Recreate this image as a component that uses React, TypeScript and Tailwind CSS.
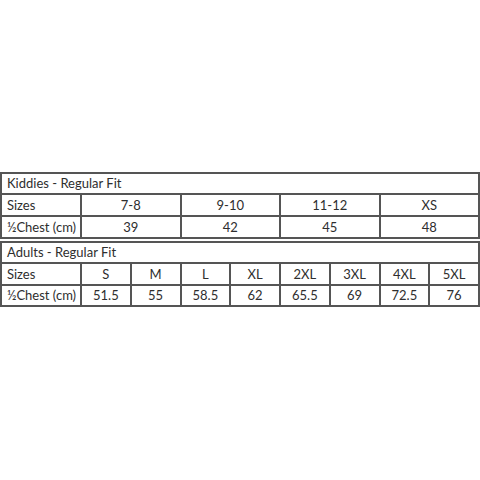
import React from 'react'

const kidSizes = ['7-8', '9-10', '11-12', 'XS']
const kidChest = ['39', '42', '45', '48']
const adultSizes = ['S', 'M', 'L', 'XL', '2XL', '3XL', '4XL', '5XL']
const adultChest = ['51.5', '55', '58.5', '62', '65.5', '69', '72.5', '76']

const SizeRow = ({ label, values, cols, h }: { label: string; values: string[]; cols: string; h: string }) => (
  <div className={`grid ${cols} border-t-2 border-[#555] ${h}`}>
    <div className="flex items-center pl-[5px]">{label}</div>
    {values.map((v, i) => (
      <div key={i} className="flex items-center justify-center border-l-2 border-[#555]">
        {v}
      </div>
    ))}
  </div>
)

export default function App() {
  return (
    <div className="w-[480px] h-[480px] bg-white text-[#2e2e2e] text-[13px] leading-none font-['Lato',sans-serif]">
      <div className="pt-[172px] flex flex-col gap-[2px]">
        {/* Kiddies */}
        <div className="border-2 border-[#555]">
          <div className="h-[19px] flex items-center pl-[5px]">Kiddies - Regular Fit</div>
          <SizeRow label="Sizes" values={kidSizes} cols="grid-cols-[78px_repeat(4,1fr)]" h="h-[22px]" />
          <SizeRow label="½Chest (cm)" values={kidChest} cols="grid-cols-[78px_repeat(4,1fr)]" h="h-[22px]" />
        </div>

        {/* Adults */}
        <div className="border-2 border-[#555]">
          <div className="h-[19px] flex items-center pl-[5px]">Adults - Regular Fit</div>
          <SizeRow label="Sizes" values={adultSizes} cols="grid-cols-[78px_repeat(8,1fr)]" h="h-[22px]" />
          <SizeRow label="½Chest (cm)" values={adultChest} cols="grid-cols-[78px_repeat(8,1fr)]" h="h-[21px]" />
        </div>
      </div>
    </div>
  )
}
